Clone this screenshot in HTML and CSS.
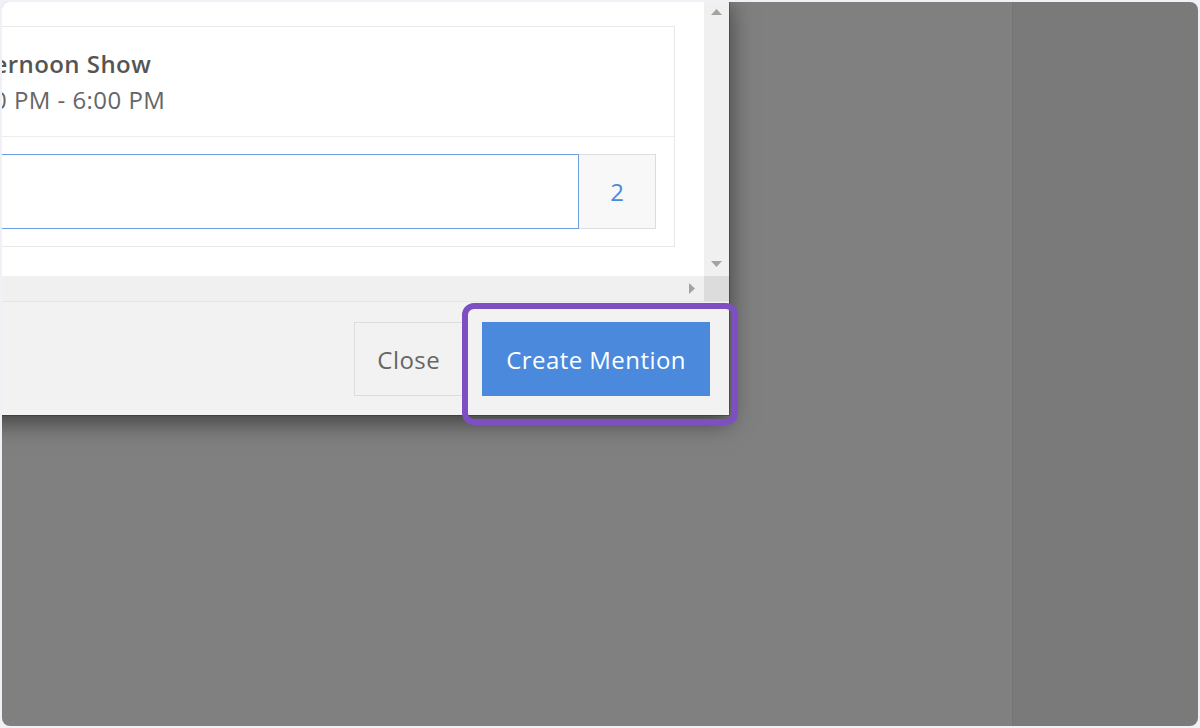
FILE: index.html
```html
<!DOCTYPE html>
<html lang="en">

<head>
    <meta charset="UTF-8">
    <meta name="viewport" content="width=device-width, initial-scale=1.0">
    <title>Create Mention</title>
    <link rel="stylesheet" href="styles.css">
</head>

<body>

    <div class="screen">
        <!-- dimmed page behind the dialog -->
        <div class="backdrop-main"></div>
        <div class="backdrop-side"></div>

        <!-- Mention dialog -->
        <div class="modal">
            <div class="modal-scroll">
                <div class="modal-body">
                    <div class="show-card">
                        <div class="show-info">
                            <div class="show-title">Afternoon Show</div>
                            <div class="show-time">3:00 PM - 6:00 PM</div>
                        </div>
                        <div class="show-input">
                            <div class="input-group">
                                <input type="text" class="mention-input">
                                <span class="input-addon">2</span>
                            </div>
                        </div>
                    </div>
                </div>
                <div class="vbar">
                    <span class="arrow">
                        <svg width="11" height="6" viewBox="0 0 11 6"><polygon points="0,6 11,6 5.5,0" /></svg>
                    </span>
                    <span class="arrow">
                        <svg width="11" height="6" viewBox="0 0 11 6"><polygon points="0,0 11,0 5.5,6" /></svg>
                    </span>
                </div>
                <div class="hbar">
                    <span class="arrow">
                        <svg width="6" height="11" viewBox="0 0 6 11"><polygon points="0,0 6,5.5 0,11" /></svg>
                    </span>
                </div>
                <div class="corner"></div>
            </div>
            <div class="modal-footer">
                <button type="button" class="btn btn-default">Close</button>
                <button type="button" class="btn btn-primary">Create Mention</button>
            </div>
        </div>

        <!-- highlight ring round the primary action -->
        <div class="highlight"></div>
    </div>

</body>

</html>
```

FILE: styles.css
```css
body {
    margin: 0;
    padding: 0;
    background-color: #f0f0f6;
    font-family: "Open Sans", "Liberation Sans", sans-serif;
}

.screen {
    position: relative;
    display: flex;
    width: 1196px;
    height: 724px;
    margin: 2px;
    border-radius: 8px;
    overflow: hidden;
}

.backdrop-main {
    width: 1010px;
    background-color: #808080;
}

.backdrop-side {
    flex: 1;
    background-color: #7a7a7a;
    border-left: 1px solid #747474;
}

.modal {
    position: absolute;
    left: -93px;
    top: -4px;
    width: 821px;
    box-sizing: border-box;
    background-color: #f2f2f2;
    background-clip: padding-box;
    border: 1px solid rgba(0, 0, 0, 0.2);
    box-shadow: 0 7px 22px rgba(0, 0, 0, 0.5);
}

.modal-scroll {
    display: grid;
    grid-template-columns: 1fr 25px;
    grid-template-rows: 277px 25px;
}

.modal-body {
    background-color: #fff;
    padding: 27px 29px 0 29px;
    overflow: hidden;
}

.show-card {
    border: 1px solid #e8e8e8;
}

.show-info {
    padding: 19px 18px 18px;
    border-bottom: 1px solid #eee;
}

.show-title {
    font-size: 24px;
    line-height: 36px;
    font-weight: 600;
    letter-spacing: 0.45px;
    color: #555;
}

.show-time {
    font-size: 24px;
    line-height: 36px;
    letter-spacing: 0.45px;
    color: #666;
}

.show-input {
    padding: 17px 18px 17px;
}

.input-group {
    display: flex;
    height: 75px;
}

.mention-input {
    flex: 1;
    margin: 0;
    padding: 0 18px;
    border: 1px solid #6d9fe6;
    font-family: inherit;
    font-size: 24px;
    outline: none;
}

.input-addon {
    display: flex;
    align-items: center;
    justify-content: center;
    width: 76px;
    background-color: #f8f8f8;
    border: 1px solid #ddd;
    border-left: 0;
    color: #4a89dc;
    font-size: 24px;
}

.vbar {
    display: flex;
    flex-direction: column;
    justify-content: space-between;
    background-color: #f0f0f0;
}

.hbar {
    display: flex;
    justify-content: flex-end;
    background-color: #f0f0f0;
}

.corner {
    background-color: #dcdcdc;
}

.arrow {
    display: flex;
    align-items: center;
    justify-content: center;
    width: 25px;
    height: 25px;
    fill: #a3a3a3;
}

.modal-footer {
    display: flex;
    justify-content: flex-end;
    gap: 19px;
    padding: 20px 19px 19px;
    border-top: 1px solid #e5e5e5;
}

.btn {
    height: 74px;
    padding: 0 23px;
    font-family: inherit;
    font-size: 24px;
    letter-spacing: 0.45px;
    border: 1px solid transparent;
    border-radius: 0;
    cursor: pointer;
}

.btn-default {
    padding: 0 22px;
    background-color: #f2f2f2;
    border-color: #ddd;
    color: #666;
}

.btn-primary {
    background-color: #4a89dc;
    color: #fff;
}

.highlight {
    position: absolute;
    left: 460px;
    top: 301px;
    width: 276px;
    height: 122px;
    box-sizing: border-box;
    border: 6px solid #7d4fc3;
    border-radius: 12px;
}
```
